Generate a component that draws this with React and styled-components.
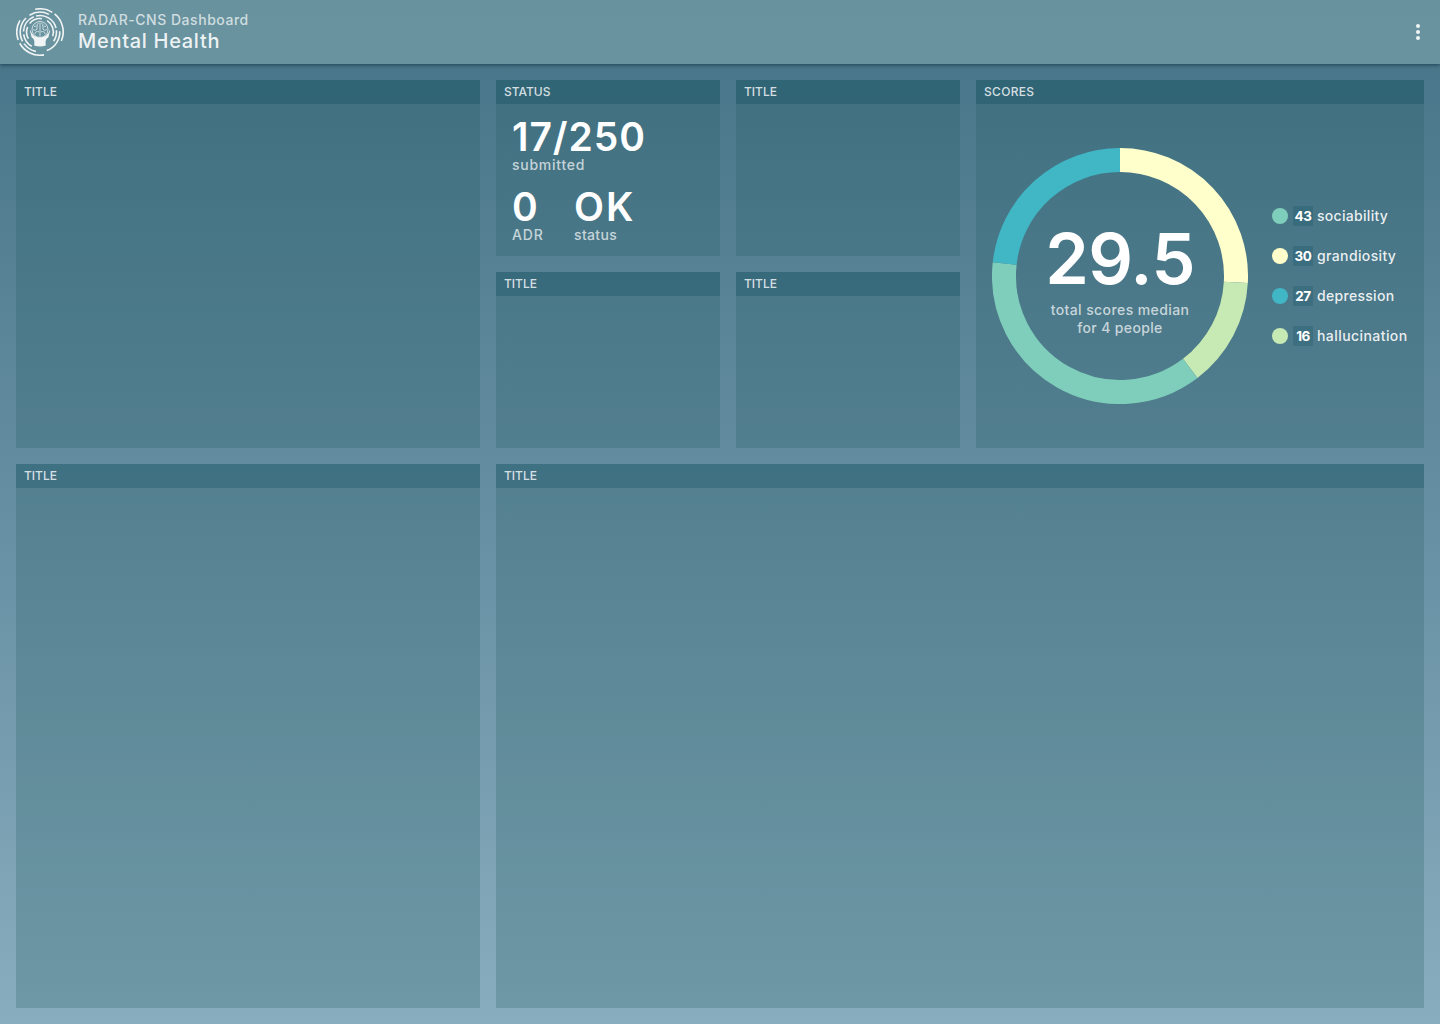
import React from 'react';
import styled, { createGlobalStyle } from 'styled-components';

const GlobalStyle = createGlobalStyle`
  * { box-sizing: border-box; }
  body { margin: 0; }
`;

const Page = styled.div`
  display: flex;
  flex-direction: column;
  height: 1024px;
  overflow: hidden;
  font-family: Inter, 'Liberation Sans', sans-serif;
  font-weight: 500;
  color: #fff;
  background: linear-gradient(#446f84 0%, #4a778b 7%, #628b9f 44%, #88adbe 100%);
`;

const Header = styled.header`
  display: flex;
  align-items: center;
  flex: none;
  height: 64px;
  padding: 0 16px;
  background: linear-gradient(#67929e, #69949f);
  box-shadow: 0 1px 4px rgba(0, 30, 50, 0.6);
`;

const Titles = styled.div`
  display: flex;
  flex-direction: column;
  flex: 1;
  margin-left: 14px;
  padding-bottom: 3px;
`;

const Line = styled.div`
  white-space: nowrap;
  font-size: ${(p) => p.$size}px;
  line-height: ${(p) => p.$line}px;
  letter-spacing: ${(p) => p.$track || 0}px;
  font-weight: ${(p) => p.$weight || 500};
  color: rgba(255, 255, 255, ${(p) => (p.$muted ? 0.7 : p.$soft ? 0.9 : 1)});
`;

const Menu = styled.button`
  display: flex;
  flex-direction: column;
  align-items: center;
  gap: 2px;
  width: 12px;
  padding: 0;
  border: 0;
  background: none;
`;

const MenuDot = styled.span`
  width: 4px;
  height: 4px;
  border-radius: 50%;
  background: #f0f4f5;
`;

const Grid = styled.main`
  display: grid;
  grid-template-columns: 464px 224px 224px 448px;
  grid-template-rows: 176px 176px 544px;
  gap: 16px;
  padding: 16px;
`;

const Card = styled.section`
  display: flex;
  flex-direction: column;
  grid-column: span ${(p) => p.$cols || 1};
  grid-row: span ${(p) => p.$rows || 1};
  background: rgba(34, 90, 95, 0.25);
`;

const CardTitle = styled.h2`
  flex: none;
  height: 24px;
  margin: 0;
  padding: 0 8px;
  font-size: 12px;
  line-height: 24px;
  font-weight: 500;
  letter-spacing: ${(p) => p.$track}px;
  color: rgba(255, 255, 255, 0.8);
  background: rgba(0, 68, 88, 0.25);
`;

const Stats = styled.div`
  display: grid;
  grid-template-columns: 62px 1fr;
  row-gap: 14px;
  padding: 14px 16px;
`;

const Stat = styled.div`
  grid-column: span ${(p) => p.$span || 1};
`;

const Scores = styled.div`
  display: flex;
  align-items: center;
  flex: 1;
  padding: 0 0 0 16px;
`;

const Donut = styled.div`
  display: grid;
  place-items: center;
  width: 256px;
  height: 256px;
  & > * { grid-area: 1 / 1; }
`;

const DonutLabel = styled.div`
  text-align: center;
  padding-top: 2px;
`;

const Legend = styled.ul`
  display: flex;
  flex-direction: column;
  gap: 20px;
  margin: 0 0 0 24px;
  padding: 0;
  list-style: none;
`;

const LegendRow = styled.li`
  display: flex;
  align-items: center;
  height: 20px;
`;

const Swatch = styled.span`
  width: 16px;
  height: 16px;
  border-radius: 50%;
  background: ${(p) => p.$color};
`;

const Score = styled.span`
  width: 20px;
  margin: 0 4px 0 5px;
  font-size: 13.5px;
  line-height: 20px;
  font-weight: 700;
  letter-spacing: -0.5px;
  text-align: center;
  background: rgba(0, 68, 88, 0.2);
`;

const rad = (deg) => ((deg - 90) * Math.PI) / 180;
const at = (c, r, deg) => `${(c + r * Math.cos(rad(deg))).toFixed(2)} ${(c + r * Math.sin(rad(deg))).toFixed(2)}`;
const arc = (c, r, a, b) => `M${at(c, r, a)}A${r} ${r} 0 ${b - a > 180 ? 1 : 0} 1 ${at(c, r, b)}`;

const LOGO_ARCS = [
  [23.2, -12, 32], [23.2, 39, 113], [23.2, 170, 241], [23.2, 250, 300],
  [19.8, -32, 27], [19.8, 88, 160], [19.8, 192, 234], [19.8, 242, 315],
  [16.5, -14, 76], [16.5, 84, 124], [16.5, 210, 262], [16.5, 272, 338],
  [13.4, -50, 8], [13.4, 32, 108], [13.4, 240, 292],
];

function Logo() {
  return (
    <svg width="48" height="48" viewBox="0 0 48 48" fill="none" stroke="#f0f4f5">
      {LOGO_ARCS.map(([r, a, b]) => <path key={`${r}${a}`} d={arc(24, r, a, b)} strokeWidth="1.600" />)}
      <path d="M14.500 22c-.7 1-.5 2.200.1 3.100l.9 4c.3 1 1.300 1.100 1.800 1.700 1 1.200 1.400 3.500.9 6.800 3.500 1.200 8.100 1.200 11.600 0-.5-3.300-.1-5.600.9-6.800.5-.6 1.500-.7 1.800-1.700l.9-4c.6-.9.8-2.100.1-3.100-.5 3.800-4.500 7.500-9.500 7.500s-9-3.700-9.500-7.500z" fill="#f0f4f5" stroke="none" />
      <circle cx="24" cy="21.500" r="8" strokeWidth="1" strokeOpacity=".8" />
      <path d="M24 14.500v14M22.500 15.500c-2 0-2 2.500-.3 3M25.500 15.500c2 0 2 2.500.3 3M18 18.500c2-1 3.500.5 3 2.500s-3 1.500-3.800.4M30 18.500c-2-1-3.500.5-3 2.500s3 1.500 3.800.4M19 25.800c0-2 2-2.600 4-2M29 25.800c0-2-2-2.600-4-2" strokeWidth=".9" strokeOpacity=".85" />
    </svg>
  );
}

const SCORES = [
  { name: 'sociability', value: 43, color: '#7fcdbb', track: 0.3 },
  { name: 'grandiosity', value: 30, color: '#ffffcc', track: 0.37 },
  { name: 'depression', value: 27, color: '#41b6c4', track: 0.3 },
  { name: 'hallucination', value: 16, color: '#c7e9b4', track: 0.43 },
];
const RING_ORDER = [1, 3, 0, 2];

function Ring() {
  const total = SCORES.reduce((sum, s) => sum + s.value, 0);
  let start = 0;
  return (
    <svg width="256" height="256" fill="none" strokeWidth="24">
      {RING_ORDER.map((i) => {
        const from = start;
        start += (SCORES[i].value / total) * 360;
        return <path key={i} d={arc(128, 116, from, start)} stroke={SCORES[i].color} />;
      })}
    </svg>
  );
}

function Panel({ title = 'TITLE', track = 0, cols, rows, children }) {
  return (
    <Card $cols={cols} $rows={rows}>
      <CardTitle $track={track}>{title}</CardTitle>
      {children}
    </Card>
  );
}

export default function App() {
  return (
    <Page>
      <GlobalStyle />
      <Header>
        <Logo />
        <Titles>
          <Line $size={14} $line={20} $track={0.53} $muted>RADAR-CNS Dashboard</Line>
          <Line $size={20} $line={22} $track={0.7} $soft>Mental Health</Line>
        </Titles>
        <Menu aria-label="Menu"><MenuDot /><MenuDot /><MenuDot /></Menu>
      </Header>
      <Grid>
        <Panel rows={2} />
        <Panel title="STATUS">
          <Stats>
            <Stat $span={2}>
              <Line $size={39} $line={38} $track={0.95} $weight={600}>17/250</Line>
              <Line $size={14} $line={18} $track={0.75} $muted>submitted</Line>
            </Stat>
            <Stat>
              <Line $size={39} $line={38} $weight={600}>0</Line>
              <Line $size={14} $line={18} $track={0.8} $muted>ADR</Line>
            </Stat>
            <Stat>
              <Line $size={39} $line={38} $track={2} $weight={600}>OK</Line>
              <Line $size={14} $line={18} $track={0.35} $muted>status</Line>
            </Stat>
          </Stats>
        </Panel>
        <Panel />
        <Panel title="SCORES" rows={2} track={0.3}>
          <Scores>
            <Donut>
              <Ring />
              <DonutLabel>
                <Line $size={70} $line={84} $track={-0.6} $weight={600}>29.5</Line>
                <Line $size={14} $line={18} $track={0.4} $muted>total scores median</Line>
                <Line $size={14} $line={18} $track={0.35} $muted>for 4 people</Line>
              </DonutLabel>
            </Donut>
            <Legend>
              {SCORES.map((s) => (
                <LegendRow key={s.name}>
                  <Swatch $color={s.color} />
                  <Score>{s.value}</Score>
                  <Line $size={14} $line={20} $track={s.track} $soft>{s.name}</Line>
                </LegendRow>
              ))}
            </Legend>
          </Scores>
        </Panel>
        <Panel />
        <Panel />
        <Panel />
        <Panel cols={3} />
      </Grid>
    </Page>
  );
}
